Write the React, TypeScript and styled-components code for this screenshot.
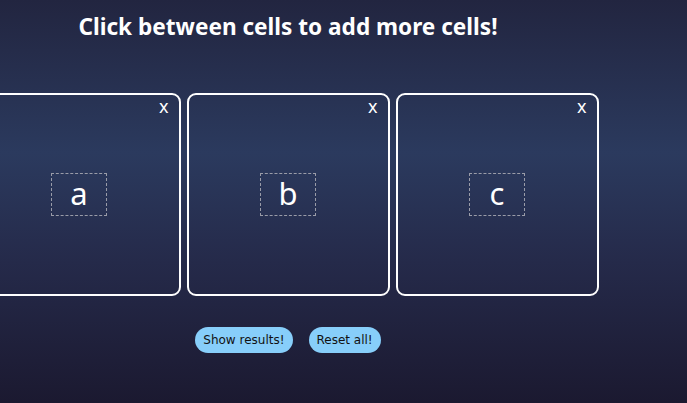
import React from "react";
import styled, { createGlobalStyle } from "styled-components";

const Global = createGlobalStyle`
  html, body { margin: 0; padding: 0; }
  body {
    width: 687px;
    height: 403px;
    overflow: hidden;
    font-family: "Noto Sans", "Open Sans", sans-serif;
    background: linear-gradient(180deg, #222540 0%, #2b3a5e 38%, #252a4a 65%, #1b1930 100%);
    color: #fff;
  }
`;

const Page = styled.main`
  width: 576px;
  display: flex;
  flex-direction: column;
  align-items: center;
`;

const Title = styled.h1`
  margin: 12px 0 0;
  font-size: 22.6px;
  font-weight: 700;
  line-height: 30px;
  white-space: nowrap;
`;

const Row = styled.div`
  margin-top: 51px;
  display: flex;
  justify-content: center;
  gap: 6px;
  width: 576px;
`;

const Cell = styled.div`
  position: relative;
  flex: 0 0 auto;
  width: 203px;
  height: 203px;
  box-sizing: border-box;
  border: 2px solid #fff;
  border-radius: 9px;
  display: flex;
  align-items: center;
  justify-content: center;
`;

const Close = styled.span`
  position: absolute;
  top: 1px;
  right: 10px;
  font-size: 18px;
  line-height: 20px;
`;

const Letter = styled.div`
  width: 56px;
  height: 43px;
  box-sizing: border-box;
  border: 1px dashed #9a9ca8;
  display: flex;
  align-items: center;
  justify-content: center;
  font-size: 31px;
  line-height: 1;
  padding-bottom: 2px;
`;

const Actions = styled.div`
  margin-top: 31px;
  display: flex;
  gap: 16px;
`;

const Button = styled.button`
  height: 26px;
  padding: 0 8px;
  border: none;
  border-radius: 13px;
  background: #87cefa;
  color: #111;
  font-family: "DejaVu Sans", sans-serif;
  font-size: 12px;
  cursor: pointer;
`;

export default function App() {
  const cells = ["a", "b", "c"];
  return (
    <>
      <Global />
      <Page>
        <Title>Click between cells to add more cells!</Title>
        <Row>
          {cells.map((c) => (
            <Cell key={c}>
              <Close>x</Close>
              <Letter>{c}</Letter>
            </Cell>
          ))}
        </Row>
        <Actions>
          <Button>Show results!</Button>
          <Button>Reset all!</Button>
        </Actions>
      </Page>
    </>
  );
}
